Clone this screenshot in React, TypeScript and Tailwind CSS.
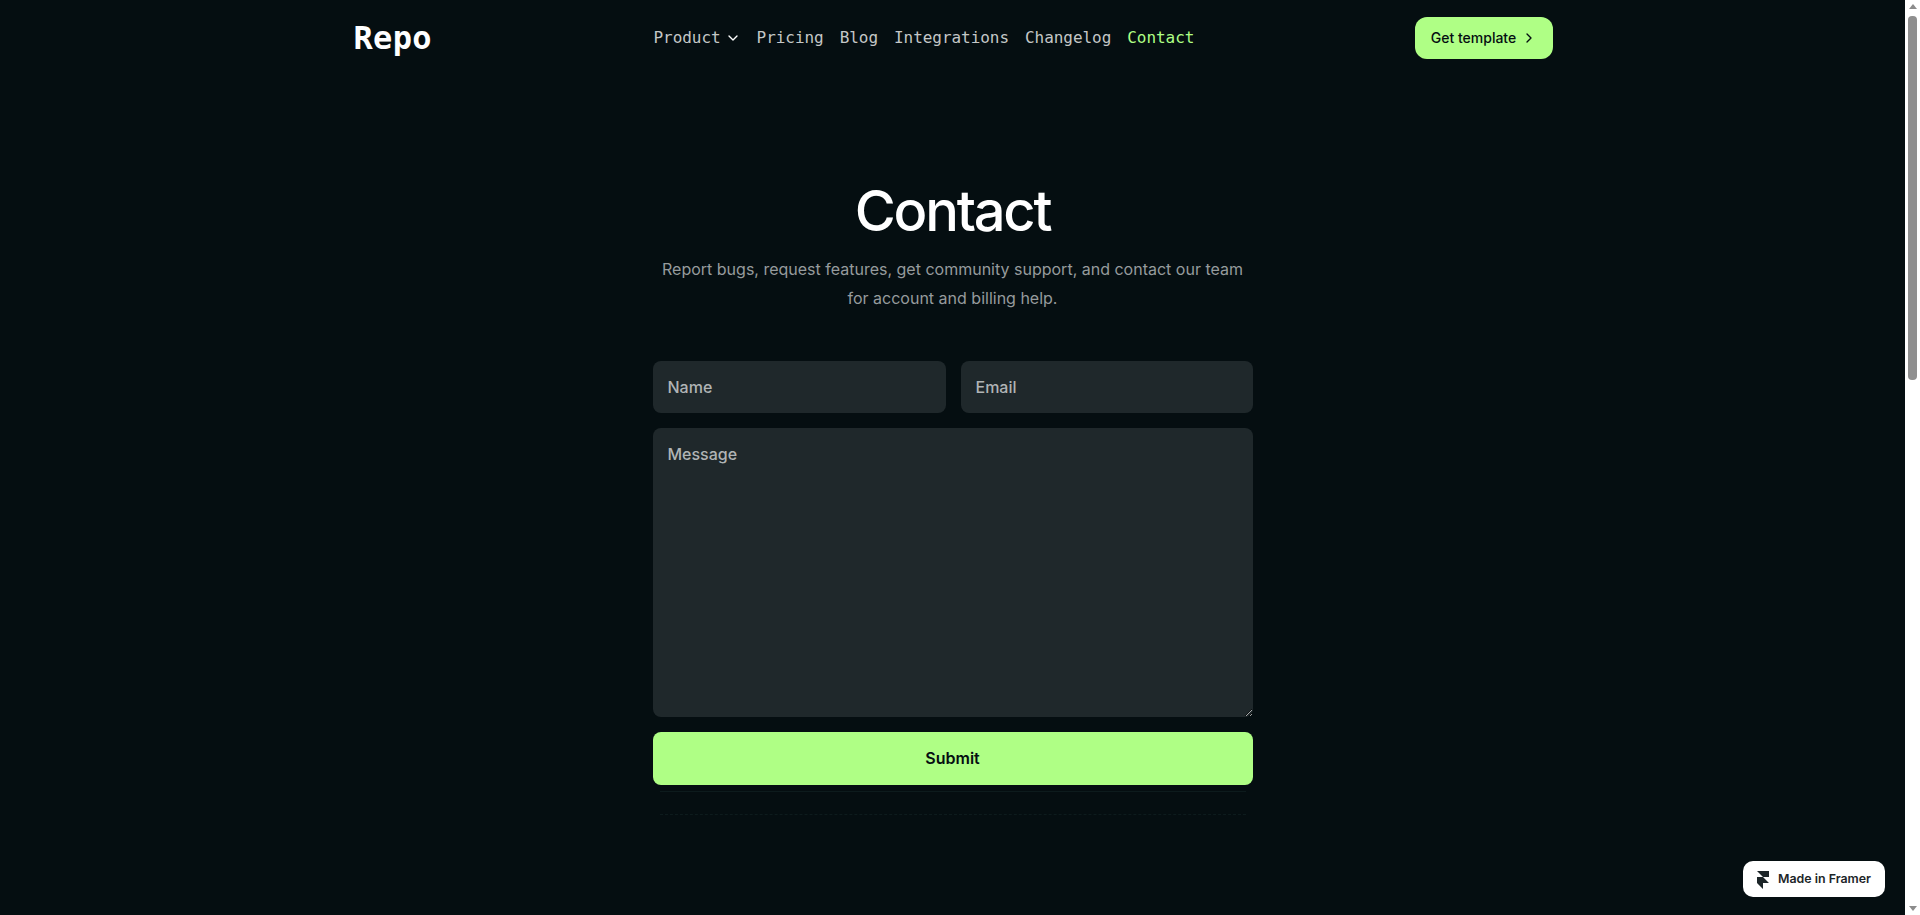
import { ChevronDown, ChevronRight } from 'lucide-react'

const navItems = ['Pricing', 'Blog', 'Integrations', 'Changelog']

function FramerMark() {
  return (
    <svg viewBox="0 0 14 21" className="h-[18px] w-[12px] fill-[#1c2528]">
      <path d="M0 0h14v7H7L0 0Z" />
      <path d="M0 7h7l7 7H7v7l-7-7V7Z" />
    </svg>
  )
}

function Scrollbar() {
  return (
    <aside className="flex h-screen w-[15px] shrink-0 flex-col items-center justify-between bg-white">
      <div className="flex w-full flex-col items-center">
        <div className="mt-[4px] h-0 w-0 border-x-[4px] border-b-[5px] border-x-transparent border-b-[#8c8c8c]" />
        <div className="mt-[7px] h-[364px] w-[9px] rounded-[4px] bg-[#8f8f8f]" />
      </div>
      <div className="mb-[4px] h-0 w-0 border-x-[4px] border-t-[5px] border-x-transparent border-t-[#8c8c8c]" />
    </aside>
  )
}

export default function App() {
  return (
    <div className="relative flex h-screen overflow-hidden bg-[#050e11] font-['Inter',sans-serif]">
      <div className="min-w-0 flex-1">
        <header className="mx-auto flex w-[1200px] items-center py-[17px]">
          <a className="w-[300px] pl-[1px] font-['DejaVu_Sans_Mono',monospace] text-[32px] leading-[42px] font-bold tracking-[0.3px] text-white">
            Repo
          </a>
          <nav className="flex flex-1 items-center gap-4 font-['DejaVu_Sans_Mono',monospace] text-base tracking-[-0.05px] text-[#c4c7c7]">
            <span className="flex items-center gap-1 pl-[1px]">
              Product
              <ChevronDown className="h-4 w-4 text-white" strokeWidth={2} />
            </span>
            {navItems.map((item) => (
              <a key={item}>{item}</a>
            ))}
            <a className="text-[#afff85]">Contact</a>
          </nav>
          <button className="flex h-[42px] w-[138px] items-center justify-center gap-[5px] rounded-xl bg-[#afff85] pl-[1px] text-sm font-medium text-[#050e11]">
            Get template
            <ChevronRight className="h-4 w-4" strokeWidth={2} />
          </button>
        </header>

        <main className="mx-auto mt-[101px] flex w-[600px] flex-col items-center">
          <h1 className="text-[56px] leading-[68px] font-medium tracking-[-0.04em] text-white">Contact</h1>
          <p className="mt-[10px] w-[600px] text-center text-base leading-[29px] text-[#969b9d]">
            Report bugs, request features, get community support, and contact our team
            <br />
            for account and billing help.
          </p>

          <form className="mt-[48px] flex w-full flex-col gap-[15px]">
            <div className="flex gap-[15px]">
              <input
                placeholder="Name"
                className="h-[52px] w-[293px] min-w-0 rounded-lg bg-[#1f282b] px-[15px] text-base font-medium text-white outline-none placeholder:text-[#b0b4b5]"
              />
              <input
                placeholder="Email"
                className="h-[52px] min-w-0 flex-1 rounded-lg bg-[#1f282b] px-[15px] text-base font-medium text-white outline-none placeholder:text-[#b0b4b5]"
              />
            </div>
            <textarea
              placeholder="Message"
              className="h-[289px] w-full rounded-lg bg-[#1f282b] px-[15px] pt-[14px] pb-[15px] text-base font-medium text-white outline-none placeholder:text-[#b0b4b5]"
            />
            <button className="h-[53px] w-full rounded-lg bg-[#afff85] pb-[1px] text-base font-semibold text-[#050e11]">
              Submit
            </button>
          </form>

          <div className="mt-[6px] h-px w-[586px] bg-[#0d1b1d]" />
          <div className="mt-[22px] w-[586px] border-t border-dashed border-[#0d1b1d]" />
        </main>
      </div>
      <Scrollbar />

      <a className="absolute right-[35px] bottom-[18px] flex h-[36px] w-[142px] items-center justify-center gap-[9px] rounded-[10px] bg-white pt-[1px] text-[12.4px] font-semibold text-[#1c2528]">
        <FramerMark />
        Made in Framer
      </a>
    </div>
  )
}
